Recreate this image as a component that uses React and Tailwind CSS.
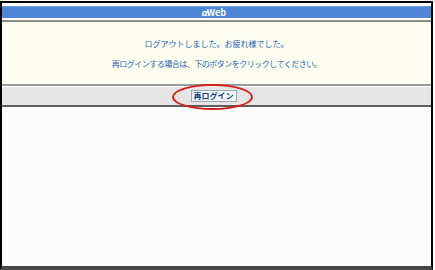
export default function App() {
  return (
    <div className="w-[435px] h-[270px] bg-white pt-px" style={{ fontFamily: '"Noto Sans CJK JP", "Noto Sans", sans-serif' }}>
      <div className="w-[433px] h-[269px] border-2 border-black border-b-4 border-b-[#474747] flex flex-col">
        <div className="pt-[3px]">
          <div className="h-[12px] bg-[#4d86d6] border-t border-[#6d9ce0] flex items-center justify-center pr-[6px]">
            <span className="text-white text-[9px] font-bold leading-none">
              <span className="italic">α</span>Web
            </span>
          </div>
        </div>
        <div className="h-[2px] bg-white" />
        <div className="h-[2px] bg-[#8a8a8a]" />
        <div className="bg-[#fdfdf0] pt-[12px] pb-[10px] text-center text-[#2163b3] text-[8px] leading-[20px]">
          <p>ログアウトしました。お疲れ様でした。</p>
          <p className="tracking-[-0.5px]">再ログインする場合は、下のボタンをクリックしてください。</p>
        </div>
        <div className="h-[2px] bg-[#9a9a9a]" />
        <div className="h-px bg-white" />
        <div className="relative h-[18px] bg-[#e6e6e6] flex items-center justify-center pr-[6px]">
          <button className="h-[12px] w-[46px] bg-[#eef7fb] border border-[#9aa6ad] text-[#173f84] text-[8px] font-bold leading-none">
            再ログイン
          </button>
          <div className="absolute left-[170px] top-[-3px] w-[81px] h-[26px] rounded-[50%] border-2 border-[#d41e1e]" />
        </div>
        <div className="h-[2px] bg-[#5e5e5e]" />
        <div className="flex-1 bg-[#fcfcfc]" />
      </div>
    </div>
  );
}
